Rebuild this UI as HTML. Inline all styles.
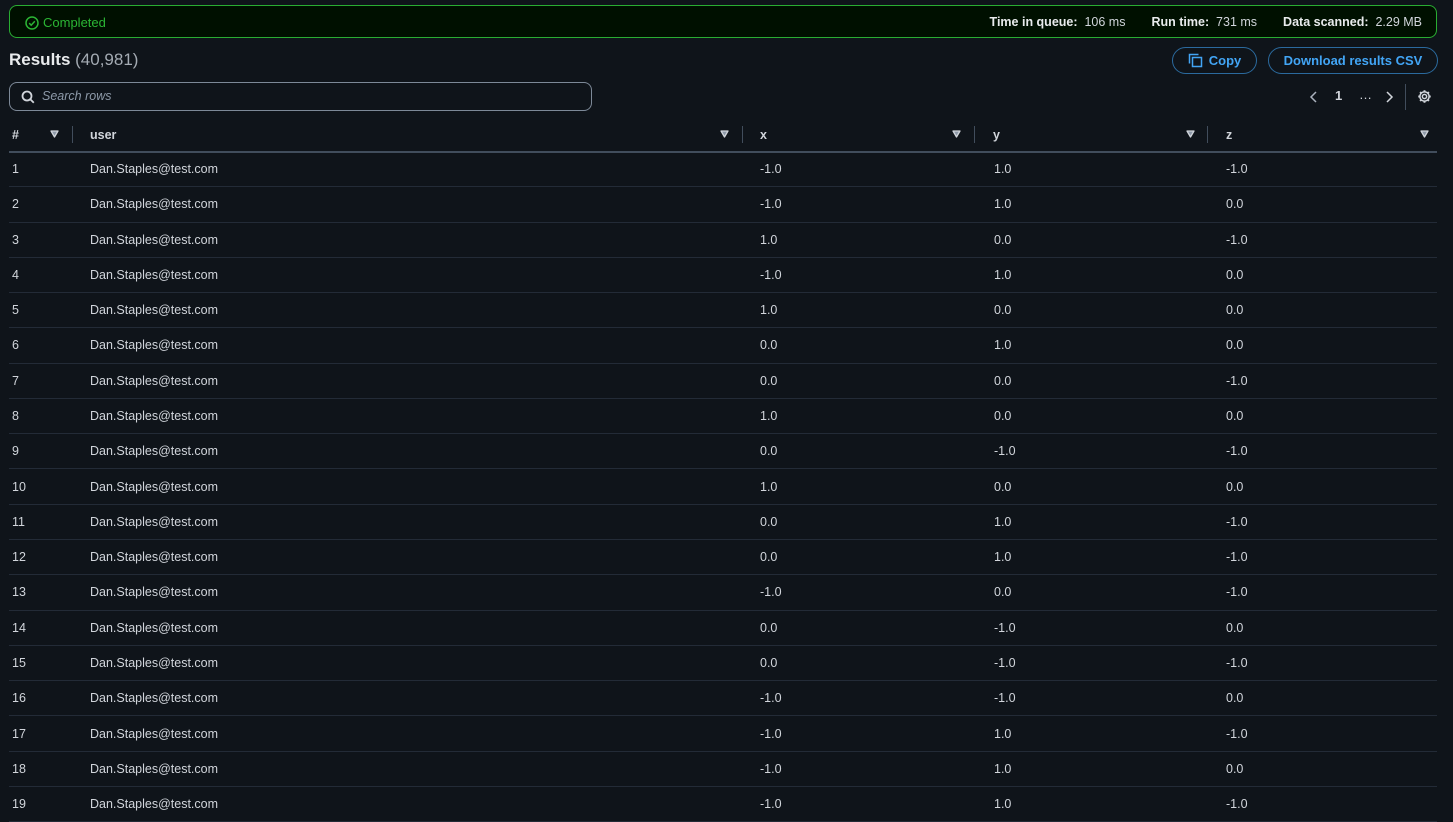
<!DOCTYPE html>
<html><head><meta charset="utf-8"><style>
*{box-sizing:border-box;margin:0;padding:0}
body{width:1453px;height:816px;overflow:hidden;background:#0f141a;font-family:"Liberation Sans",sans-serif;color:#d1d5db;font-size:12.5px;position:relative}
.banner{position:absolute;left:9px;top:5px;width:1428px;height:33px;background:#001000;border:1px solid #29ad32;border-radius:8px}
.banner .ok{position:absolute;left:15px;top:9px;color:#2bb534;font-size:13px;display:flex;align-items:center;gap:4px}
.stats{position:absolute;right:14px;top:9px;font-size:12.5px;color:#d1d5db}
.stats b{color:#e9ebed;margin-left:26px}
.title{position:absolute;left:9px;top:50px;font-size:17px;font-weight:bold;color:#e9ebed}
.title span{font-weight:normal;color:#a4abb3}
.btn{position:absolute;top:47px;height:27px;border:1px solid #2b6a9e;border-radius:14px;color:#42a5f5;font-weight:bold;font-size:13px;display:flex;align-items:center;justify-content:center;gap:6px}
.search{position:absolute;left:9px;top:82px;width:583px;height:29px;border:1px solid #7d8998;border-radius:8px;background:#0f141a}
.search span{position:absolute;left:32px;top:6px;font-style:italic;color:#8d99a8;font-size:12.5px}
.pg{position:absolute;top:88px;font-size:13px;color:#d1d5db}
.hdr{position:absolute;left:9px;top:118px;width:1428px;height:35px;border-bottom:2px solid #414d5c;font-weight:bold;color:#d1d5db}
.hdr div{position:absolute;top:10px}
.sep{position:absolute;top:8px!important;width:1px;height:17px;background:#414d5c}
.tri{position:absolute;top:12px!important}
.row{position:absolute;left:9px;width:1428px;height:35.28px;border-bottom:1px solid #232b37;color:#d1d5db}
.row span{position:absolute;top:10px}
</style></head><body>
<div class="banner"><div class="ok"><svg width="14" height="14" viewBox="0 0 14 14"><circle cx="7" cy="7" r="6" fill="none" stroke="#2bb534" stroke-width="1.5"/><path d="M4.2 7.2l2 2 3.6-4" fill="none" stroke="#2bb534" stroke-width="1.5"/></svg>Completed</div>
<div class="stats"><b style="margin-left:0">Time in queue:</b>&nbsp; 106 ms<b>Run time:</b>&nbsp; 731 ms<b>Data scanned:</b>&nbsp; 2.29 MB</div></div>
<div class="title">Results <span>(40,981)</span></div>
<div class="btn" style="left:1172px;width:85px"><svg width="15" height="15" viewBox="0 0 15 15"><path d="M1.5 10.5V1.5h9" fill="none" stroke="#42a5f5" stroke-width="1.5"/><rect x="4.5" y="4.5" width="9" height="9" fill="none" stroke="#42a5f5" stroke-width="1.5"/></svg>Copy</div>
<div class="btn" style="left:1268px;width:170px">Download results CSV</div>
<div class="search"><svg style="position:absolute;left:11px;top:7px" width="14" height="14" viewBox="0 0 14 14"><circle cx="6" cy="6" r="4.5" fill="none" stroke="#d1d5db" stroke-width="1.8"/><path d="M9.3 9.3l3.5 3.5" stroke="#d1d5db" stroke-width="1.8"/></svg><span>Search rows</span></div>
<svg style="position:absolute;left:1309px;top:91px" width="10" height="12" viewBox="0 0 10 12"><path d="M7 1L2 6l5 5" fill="none" stroke="#aab2bd" stroke-width="1.5"/></svg>
<div class="pg" style="left:1335px;font-weight:bold">1</div>
<div class="pg" style="left:1359px;top:87px">…</div>
<svg style="position:absolute;left:1384px;top:91px" width="10" height="12" viewBox="0 0 10 12"><path d="M3 1l5 5-5 5" fill="none" stroke="#d1d5db" stroke-width="1.5"/></svg>
<div style="position:absolute;left:1405px;top:84px;width:1px;height:26px;background:#414d5c"></div>
<svg style="position:absolute;left:1417px;top:89px" width="15" height="15" viewBox="0 0 14 14"><circle cx="7" cy="7" r="2" fill="none" stroke="#d1d5db" stroke-width="1.4"/><path d="M7 1.2v2M7 10.8v2M1.2 7h2M10.8 7h2M2.9 2.9l1.4 1.4M9.7 9.7l1.4 1.4M2.9 11.1l1.4-1.4M9.7 4.3l1.4-1.4" stroke="#d1d5db" stroke-width="1.8"/><circle cx="7" cy="7" r="4.3" fill="none" stroke="#d1d5db" stroke-width="1.4"/></svg>
<div class="hdr">
<div style="left:3px">#</div><svg class="tri" style="left:41px" width="9" height="8" viewBox="0 0 9 8"><path d="M1 1h7L4.5 7z" fill="#8d99a8" stroke="#d1d5db" stroke-width="1.3" stroke-linejoin="round"/></svg><div class="sep" style="left:63px"></div>
<div style="left:81px">user</div><svg class="tri" style="left:711px" width="9" height="8" viewBox="0 0 9 8"><path d="M1 1h7L4.5 7z" fill="#8d99a8" stroke="#d1d5db" stroke-width="1.3" stroke-linejoin="round"/></svg><div class="sep" style="left:733px"></div>
<div style="left:751px">x</div><svg class="tri" style="left:943px" width="9" height="8" viewBox="0 0 9 8"><path d="M1 1h7L4.5 7z" fill="#8d99a8" stroke="#d1d5db" stroke-width="1.3" stroke-linejoin="round"/></svg><div class="sep" style="left:965px"></div>
<div style="left:984px">y</div><svg class="tri" style="left:1177px" width="9" height="8" viewBox="0 0 9 8"><path d="M1 1h7L4.5 7z" fill="#8d99a8" stroke="#d1d5db" stroke-width="1.3" stroke-linejoin="round"/></svg><div class="sep" style="left:1198px"></div>
<div style="left:1217px">z</div><svg class="tri" style="left:1411px" width="9" height="8" viewBox="0 0 9 8"><path d="M1 1h7L4.5 7z" fill="#8d99a8" stroke="#d1d5db" stroke-width="1.3" stroke-linejoin="round"/></svg>
</div>
<div class="row" style="top:152px"><span style="left:3px">1</span><span style="left:81px">Dan.Staples@test.com</span><span style="left:751px">-1.0</span><span style="left:985px">1.0</span><span style="left:1217px">-1.0</span></div>
<div class="row" style="top:187.3px"><span style="left:3px">2</span><span style="left:81px">Dan.Staples@test.com</span><span style="left:751px">-1.0</span><span style="left:985px">1.0</span><span style="left:1217px">0.0</span></div>
<div class="row" style="top:222.6px"><span style="left:3px">3</span><span style="left:81px">Dan.Staples@test.com</span><span style="left:751px">1.0</span><span style="left:985px">0.0</span><span style="left:1217px">-1.0</span></div>
<div class="row" style="top:257.8px"><span style="left:3px">4</span><span style="left:81px">Dan.Staples@test.com</span><span style="left:751px">-1.0</span><span style="left:985px">1.0</span><span style="left:1217px">0.0</span></div>
<div class="row" style="top:293.1px"><span style="left:3px">5</span><span style="left:81px">Dan.Staples@test.com</span><span style="left:751px">1.0</span><span style="left:985px">0.0</span><span style="left:1217px">0.0</span></div>
<div class="row" style="top:328.4px"><span style="left:3px">6</span><span style="left:81px">Dan.Staples@test.com</span><span style="left:751px">0.0</span><span style="left:985px">1.0</span><span style="left:1217px">0.0</span></div>
<div class="row" style="top:363.7px"><span style="left:3px">7</span><span style="left:81px">Dan.Staples@test.com</span><span style="left:751px">0.0</span><span style="left:985px">0.0</span><span style="left:1217px">-1.0</span></div>
<div class="row" style="top:399px"><span style="left:3px">8</span><span style="left:81px">Dan.Staples@test.com</span><span style="left:751px">1.0</span><span style="left:985px">0.0</span><span style="left:1217px">0.0</span></div>
<div class="row" style="top:434.2px"><span style="left:3px">9</span><span style="left:81px">Dan.Staples@test.com</span><span style="left:751px">0.0</span><span style="left:985px">-1.0</span><span style="left:1217px">-1.0</span></div>
<div class="row" style="top:469.5px"><span style="left:3px">10</span><span style="left:81px">Dan.Staples@test.com</span><span style="left:751px">1.0</span><span style="left:985px">0.0</span><span style="left:1217px">0.0</span></div>
<div class="row" style="top:504.8px"><span style="left:3px">11</span><span style="left:81px">Dan.Staples@test.com</span><span style="left:751px">0.0</span><span style="left:985px">1.0</span><span style="left:1217px">-1.0</span></div>
<div class="row" style="top:540.1px"><span style="left:3px">12</span><span style="left:81px">Dan.Staples@test.com</span><span style="left:751px">0.0</span><span style="left:985px">1.0</span><span style="left:1217px">-1.0</span></div>
<div class="row" style="top:575.4px"><span style="left:3px">13</span><span style="left:81px">Dan.Staples@test.com</span><span style="left:751px">-1.0</span><span style="left:985px">0.0</span><span style="left:1217px">-1.0</span></div>
<div class="row" style="top:610.6px"><span style="left:3px">14</span><span style="left:81px">Dan.Staples@test.com</span><span style="left:751px">0.0</span><span style="left:985px">-1.0</span><span style="left:1217px">0.0</span></div>
<div class="row" style="top:645.9px"><span style="left:3px">15</span><span style="left:81px">Dan.Staples@test.com</span><span style="left:751px">0.0</span><span style="left:985px">-1.0</span><span style="left:1217px">-1.0</span></div>
<div class="row" style="top:681.2px"><span style="left:3px">16</span><span style="left:81px">Dan.Staples@test.com</span><span style="left:751px">-1.0</span><span style="left:985px">-1.0</span><span style="left:1217px">0.0</span></div>
<div class="row" style="top:716.5px"><span style="left:3px">17</span><span style="left:81px">Dan.Staples@test.com</span><span style="left:751px">-1.0</span><span style="left:985px">1.0</span><span style="left:1217px">-1.0</span></div>
<div class="row" style="top:751.8px"><span style="left:3px">18</span><span style="left:81px">Dan.Staples@test.com</span><span style="left:751px">-1.0</span><span style="left:985px">1.0</span><span style="left:1217px">0.0</span></div>
<div class="row" style="top:787px"><span style="left:3px">19</span><span style="left:81px">Dan.Staples@test.com</span><span style="left:751px">-1.0</span><span style="left:985px">1.0</span><span style="left:1217px">-1.0</span></div>
</body></html>
